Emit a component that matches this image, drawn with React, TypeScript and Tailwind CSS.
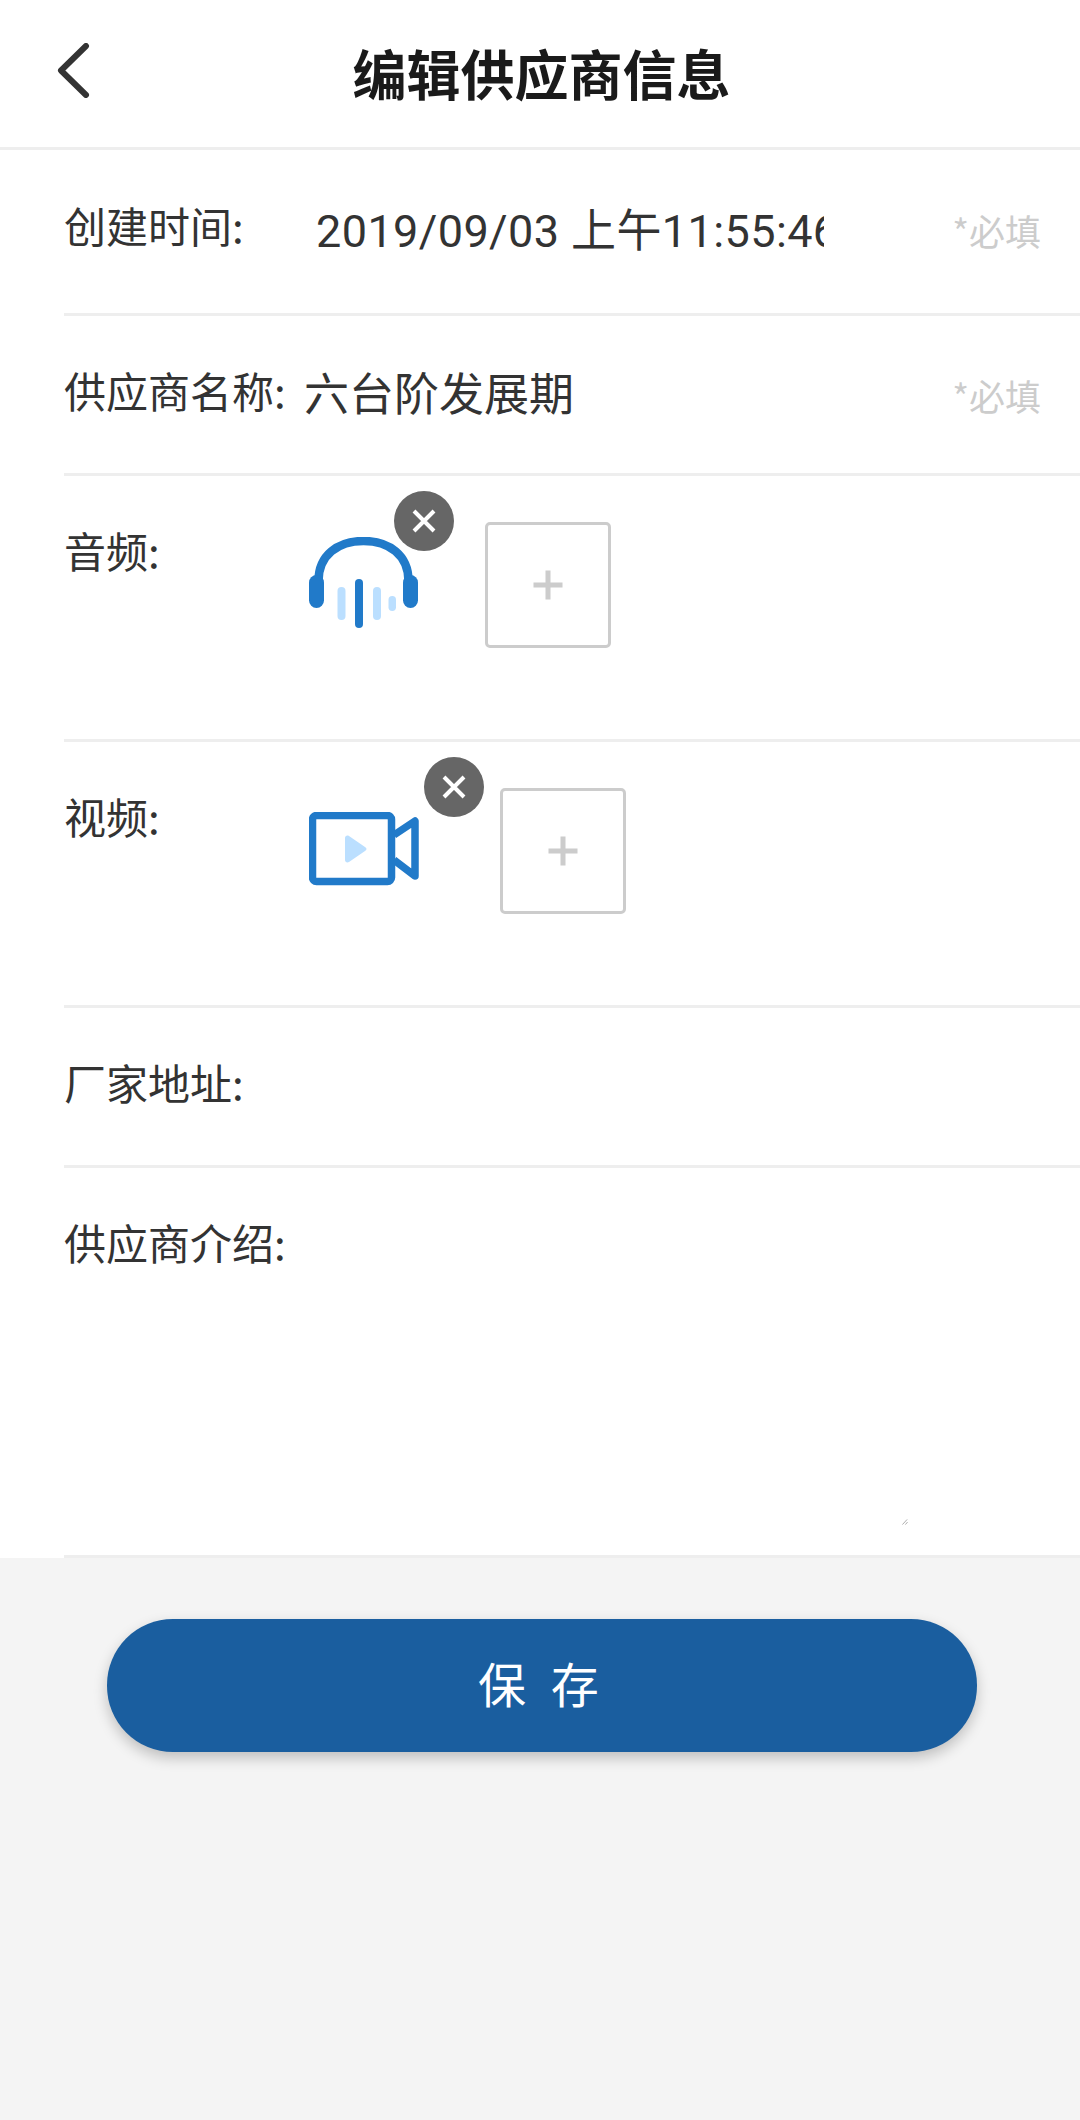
const font = "font-['Noto_Sans_CJK_SC','Noto_Sans',sans-serif]";

function CloseBadge({ className }: { className: string }) {
  return (
    <div className={`absolute flex h-[60px] w-[60px] items-center justify-center rounded-full bg-[#666666] ${className}`}>
      <svg width="24" height="24" viewBox="0 0 24 24" fill="none" stroke="#fff" strokeWidth="4">
        <path d="M2 2 L22 22 M22 2 L2 22" />
      </svg>
    </div>
  );
}

function AddBox() {
  return (
    <div className="flex h-[126px] w-[126px] shrink-0 items-center justify-center rounded-[5px] border-[3px] border-[#cccccc] bg-white">
      <svg width="30" height="30" viewBox="0 0 30 30" fill="#cccccc">
        <rect x="0.5" y="12.5" width="29" height="5" />
        <rect x="12.5" y="0.5" width="5" height="29" />
      </svg>
    </div>
  );
}

function Headphones() {
  return (
    <svg width="110" height="92" viewBox="0 0 110 92" fill="none">
      <path d="M9.500 44 C9.500 18 29 4 54.500 4 C80 4 99.500 18 99.500 44" stroke="#217ac9" strokeWidth="8.500" />
      <rect x="0" y="38" width="15" height="33" rx="7.500" fill="#217ac9" />
      <rect x="94" y="38" width="15" height="33" rx="7.500" fill="#217ac9" />
      <rect x="46" y="42" width="8" height="49" rx="4" fill="#217ac9" />
      <rect x="28.500" y="50" width="8" height="33" rx="4" fill="#bbdfff" />
      <rect x="64" y="50" width="8" height="33" rx="4" fill="#bbdfff" />
      <rect x="79.500" y="59" width="7.500" height="15" rx="3.700" fill="#bbdfff" />
    </svg>
  );
}

function VideoCam() {
  return (
    <svg width="110" height="74" viewBox="0 0 110 74" fill="none">
      <rect x="3.500" y="3.500" width="79" height="66" rx="4" stroke="#217ac9" strokeWidth="7.500" />
      <path d="M85 23 L106 9 L106 64 L85 48" stroke="#217ac9" strokeWidth="7.500" strokeLinejoin="round" />
      <path d="M36 26 C36 24 38 23 40 24 L56 35 C58 36 58 38 56 39 L40 50 C38 51 36 50 36 48 Z" fill="#bbdfff" />
    </svg>
  );
}

function Required() {
  return <span className="mr-[39px] shrink-0 text-[36px] leading-none text-[#cccccc]">*必填</span>;
}

export default function App() {
  return (
    <div className={`min-h-[2120px] w-[1080px] bg-[#f4f4f4] ${font}`}>
      <div className="bg-white">
        <header className="relative flex h-[150px] items-center justify-center border-b-[3px] border-[#eeeeee] pb-[2px] pl-[3px]">
          <svg className="absolute left-[56px] top-[43px]" width="34" height="55" viewBox="0 0 34 55" fill="none">
            <path d="M30 3 L5 27.500 L30 52" stroke="#333333" strokeWidth="6" strokeLinecap="round" strokeLinejoin="round" />
          </svg>
          <h1 className="text-[54px] leading-none font-bold text-[#1a1a1a]">编辑供应商信息</h1>
        </header>

        <div className="ml-[64px] flex h-[166px] items-start border-b-[3px] border-[#eeeeee] pt-[50px] text-[#333333]">
          <span className="w-[252px] shrink-0 text-[42px] leading-[1.2]">创建时间:</span>
          <span className="w-[508px] shrink-0 overflow-hidden whitespace-nowrap pt-[5px] font-['Roboto','Noto_Sans_CJK_SC',sans-serif] text-[45px] leading-[1.2] tracking-[0.4px]">2019/09/03 上午11:55:46</span>
          <span className="mt-[12px] ml-auto"><Required /></span>
        </div>

        <div className="ml-[64px] flex h-[160px] items-start border-b-[3px] border-[#eeeeee] pt-[49px] text-[#333333]">
          <span className="w-[240px] shrink-0 text-[42px] leading-[1.2]">供应商名称:</span>
          <span className="shrink-0 text-[45px] leading-[1.2]">六台阶发展期</span>
          <span className="mt-[12px] ml-auto"><Required /></span>
        </div>

        <div className="ml-[64px] flex h-[266px] items-start border-b-[3px] border-[#eeeeee] pt-[24px] text-[#333333]">
          <span className="mt-[25px] w-[245px] shrink-0 text-[42px] leading-[1.2]">音频:</span>
          <div className="relative mt-[37px] mr-[67px] h-[92px] w-[109px] shrink-0">
            <Headphones />
            <CloseBadge className="-top-[46px] left-[85px]" />
          </div>
          <div className="mt-[22px]"><AddBox /></div>
        </div>

        <div className="ml-[64px] flex h-[266px] items-start border-b-[3px] border-[#eeeeee] pt-[24px] text-[#333333]">
          <span className="mt-[25px] w-[245px] shrink-0 text-[42px] leading-[1.2]">视频:</span>
          <div className="relative mt-[46px] mr-[82px] h-[74px] w-[109px] shrink-0">
            <VideoCam />
            <CloseBadge className="-top-[55px] left-[115px]" />
          </div>
          <div className="mt-[22px]"><AddBox /></div>
        </div>

        <div className="ml-[64px] flex h-[160px] items-start border-b-[3px] border-[#eeeeee] pt-[49px] text-[#333333]">
          <span className="text-[42px] leading-[1.2]">厂家地址:</span>
        </div>

        <div className="relative ml-[64px] h-[390px] border-b-[3px] border-[#eeeeee] pt-[49px] text-[#333333]">
          <span className="text-[42px] leading-[1.2]">供应商介绍:</span>
          <svg className="absolute left-[838px] top-[351px]" width="6" height="6" viewBox="0 0 7 7" stroke="#888888" strokeWidth="0.8">
            <path d="M0.500 6.500 L6 0.500 M4 6.500 L6.500 3.500" />
          </svg>
        </div>
      </div>

      <div className="flex justify-center pt-[61px] pl-[4px]">
        <button className="h-[133px] w-[870px] rounded-[66px] bg-[#1a5e9f] pb-[8px] text-[48px] tracking-[7px] text-white shadow-[0_6px_14px_rgba(0,0,0,0.22)]">
          保 存
        </button>
      </div>
    </div>
  );
}
